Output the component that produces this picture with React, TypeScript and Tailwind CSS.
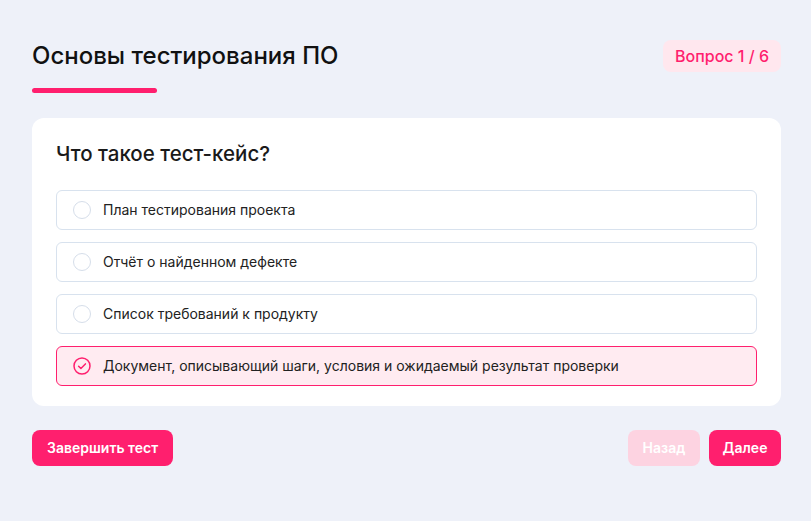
import { useState } from 'react'

const options = [
  'План тестирования проекта',
  'Отчёт о найденном дефекте',
  'Список требований к продукту',
  'Документ, описывающий шаги, условия и ожидаемый результат проверки',
]

function CheckCircle() {
  return (
    <svg width="18" height="18" viewBox="0 0 18 18" fill="none">
      <circle cx="9" cy="9" r="8" stroke="#ff1f6e" strokeWidth="1.5" />
      <path d="M5.6 9.2l2.3 2.3 4.5-4.6" stroke="#ff1f6e" strokeWidth="1.5" strokeLinecap="round" strokeLinejoin="round" />
    </svg>
  )
}

export default function App() {
  const [selected, setSelected] = useState(3)

  return (
    <div className="min-h-screen bg-[#eef1f9] font-['Inter',sans-serif]">
      <div className="w-[749px] pl-8 pt-[38px] box-content">
        <div className="flex items-start justify-between">
          <div>
            <h1 className="text-2xl leading-[36px] text-[#111] font-medium">Основы тестирования ПО</h1>
            <div className="mt-[14px] h-[5px] w-[125px] rounded-full bg-[#ff1f6e]" />
          </div>
          <div className="mt-[2px] rounded-lg bg-[#ffe7ee] px-3 h-8 flex items-center text-base font-medium text-[#ff1f6e]">
            Вопрос 1 / 6
          </div>
        </div>

        <div className="mt-[25px] rounded-xl bg-white px-6 pt-[22px] pb-[20px]">
          <h2 className="text-[20.5px] leading-[28px] text-[#1a1a1a] font-medium">Что такое тест-кейс?</h2>
          <div className="mt-[22px] flex flex-col gap-3">
            {options.map((text, i) => {
              const active = selected === i
              return (
                <button
                  key={i}
                  onClick={() => setSelected(i)}
                  className={
                    active
                      ? 'flex h-10 items-center gap-3 rounded-md border border-[#ff1f6e] bg-[#ffebf1] px-4 text-left text-sm text-[#222]'
                      : 'flex h-10 items-center gap-3 rounded-md border border-[#d8e2ee] bg-white px-4 text-left text-sm text-[#222]'
                  }
                >
                  {active ? (
                    <CheckCircle />
                  ) : (
                    <span className="h-[18px] w-[18px] rounded-full border border-[#d6deea]" />
                  )}
                  {text}
                </button>
              )
            })}
          </div>
        </div>

        <div className="mt-6 flex items-center justify-between">
          <button className="h-9 rounded-lg bg-[#ff1f6e] px-[15px] text-sm font-semibold text-white">Завершить тест</button>
          <div className="flex gap-[9px]">
            <button className="h-9 w-[72px] rounded-lg bg-[#fdd3e1] text-sm font-semibold text-white">Назад</button>
            <button className="h-9 w-[72px] rounded-lg bg-[#ff1f6e] text-sm font-semibold text-white">Далее</button>
          </div>
        </div>
      </div>
    </div>
  )
}
